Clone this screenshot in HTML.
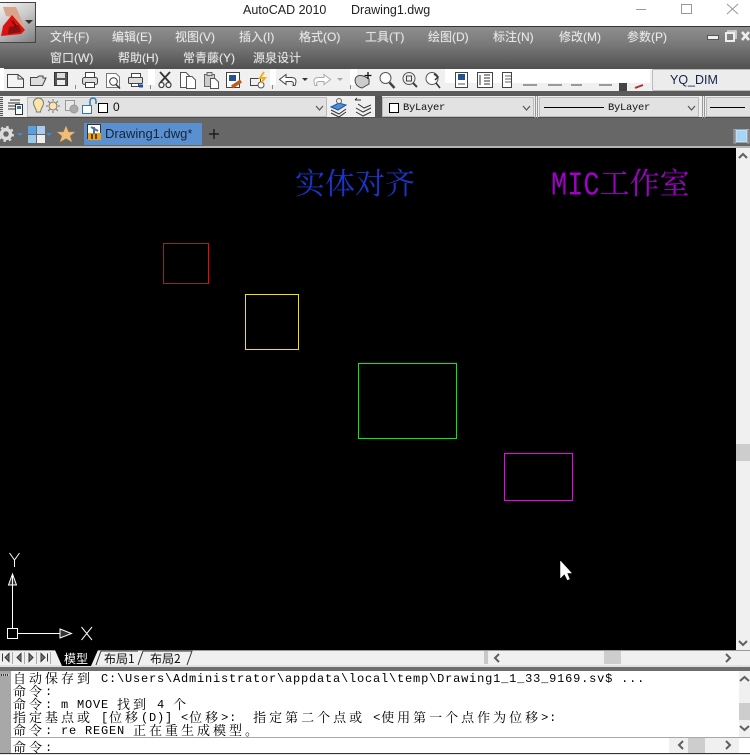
<!DOCTYPE html>
<html><head><meta charset="utf-8">
<style>
html,body{margin:0;padding:0;background:#000}
#p{position:relative;width:750px;height:755px;overflow:hidden;background:#000;font-family:"Liberation Sans","Noto Sans CJK SC",sans-serif}
#p div{position:absolute}
.t{white-space:nowrap}
.m{color:#e8e8e8;font-size:12px;line-height:16px;white-space:nowrap;font-family:"Liberation Sans","WenQuanYi Zen Hei",sans-serif;text-shadow:0 0 1px rgba(255,255,255,.35)}
.c{left:13px;white-space:pre;font-family:"Liberation Mono",monospace;font-size:12px;letter-spacing:.8px;line-height:13px;color:#000;height:13px}
.z{font-family:"Noto Serif CJK SC","WenQuanYi Zen Hei",serif;font-size:13px;letter-spacing:3px;line-height:13px;position:relative;top:1px}
svg{position:absolute;overflow:visible}
</style></head><body>
<div id="p">
<!-- title -->
<div style="left:0;top:0;width:750px;height:26px;background:#fff"></div>
<div class="t" style="left:243px;top:2px;font-size:12.5px;line-height:16px;color:#222">AutoCAD 2010</div>
<div class="t" style="left:351px;top:2px;font-size:12.5px;line-height:16px;color:#222">Drawing1.dwg</div>
<svg style="left:0;top:0" width="750" height="26"><path d="M636 9.5H646M681.5 4.5H691.5V13.5H681.5ZM727 4L738 14M738 4L727 14" stroke="#999" fill="none"/></svg>
<!-- menu -->
<div style="left:0;top:26px;width:750px;height:43px;background:linear-gradient(#8e8e8e,#7a7a7a 40%,#505050);border-top:1px solid #333;box-sizing:border-box"></div>
<div class="m" style="left:50px;top:29px">文件(F)</div>
<div class="m" style="left:112px;top:29px">编辑(E)</div>
<div class="m" style="left:175px;top:29px">视图(V)</div>
<div class="m" style="left:239px;top:29px">插入(I)</div>
<div class="m" style="left:299px;top:29px">格式(O)</div>
<div class="m" style="left:365px;top:29px">工具(T)</div>
<div class="m" style="left:428px;top:29px">绘图(D)</div>
<div class="m" style="left:493px;top:29px">标注(N)</div>
<div class="m" style="left:559px;top:29px">修改(M)</div>
<div class="m" style="left:627px;top:29px">参数(P)</div>
<div class="m" style="left:50px;top:50px">窗口(W)</div>
<div class="m" style="left:118px;top:50px">帮助(H)</div>
<div class="m" style="left:183px;top:50px">常青藤(Y)</div>
<div class="m" style="left:253px;top:50px">源泉设计</div>
<svg style="left:700px;top:28px" width="50" height="16" fill="none"><rect x="7.500" y="7.500" width="11" height="4" fill="#eee" stroke="#555"/><rect x="26" y="5" width="8" height="8" stroke="#eee" stroke-width="2"/><path d="M27 3H36V11" stroke="#ddd" stroke-width="1.500"/><path d="M42 4L49 12M49 4L42 12" stroke="#eee" stroke-width="2.500"/></svg>
<!-- app button -->
<div style="left:0;top:2px;width:36px;height:41px;background:linear-gradient(150deg,#f2f2f2,#c8c8c8 45%,#7e7e7e);border:1px solid #444;border-left:0;box-sizing:border-box"></div>
<svg style="left:0;top:0" width="36" height="43"><path d="M3 7L16 7L26 30L12 17L6 16Z" fill="#d8a48c"/><path d="M12 15L25 30L21 34L1 36L3 26Z" fill="#dc1212"/><path d="M9 27L19 25L21 32L8 34Z" fill="#8a1010"/><path d="M12 21L16 26" stroke="#600" stroke-width="1.500"/><path d="M25 20H33L29 24Z" fill="#333"/></svg>
<!-- toolbar row 1 -->
<div style="left:0;top:69px;width:750px;height:22px;background:#f0f0f0"></div>
<div style="left:0;top:68px;width:4px;height:22px;background:#fff"></div>
<div style="left:148px;top:69px;width:7px;height:16px;background:#fff"></div>
<div style="left:270px;top:69px;width:6px;height:16px;background:#fff"></div>
<div style="left:350px;top:69px;width:7px;height:16px;background:#fff"></div>
<div style="left:445px;top:69px;width:205px;height:14px;background:#fff"></div>
<div style="left:652px;top:69px;width:98px;height:22px;background:#ececec;border:1px solid #bbb;border-right:0;box-sizing:border-box;border-radius:2px 0 0 2px"></div>
<div class="t" style="left:670px;top:72px;font-size:12.5px;line-height:16px;color:#15234a">YQ_DIM</div>
<div style="left:0;top:91px;width:750px;height:5px;background:#5c5c5c"></div>
<svg style="left:0;top:69px" width="650" height="23" fill="none" stroke="#444">
<path d="M7.500 5.500H18L23.500 10V18.500H7.500Z" fill="#f4f4f4" stroke="#444"/><path d="M18 5.500V10H23.500" stroke="#444"/>
<path d="M30.500 8.500H37L39 7H43V9H46L42.500 16.500H30.500Z" fill="#ddd" stroke="#444"/>
<rect x="54.500" y="3.500" width="13" height="13" fill="#555" stroke="#333"/><rect x="57" y="4" width="8" height="5" fill="#ddd" stroke="none"/><rect x="57" y="11" width="8" height="5" fill="#eee" stroke="none"/>
<rect x="85.500" y="3.500" width="9" height="6" fill="#fff"/><rect x="82.500" y="8.500" width="15" height="7" rx="2" fill="#ddd"/><rect x="85.500" y="13.500" width="9" height="5" fill="#fff"/>
<path d="M106.500 4.500H116L119.500 8V18.500H106.500Z" fill="#fff" stroke="#777"/><circle cx="113.500" cy="12.500" r="3.800" fill="#fff" stroke="#333"/><path d="M116 15.500L120 19.500" stroke="#333" stroke-width="1.500"/>
<rect x="131.500" y="4.500" width="9" height="4" fill="#fff"/><rect x="128.500" y="8.500" width="14" height="6" rx="1" fill="#ddd"/><rect x="131.500" y="14.500" width="7" height="3" fill="#fff"/><path d="M139 17H143" stroke="#1b4fa0" stroke-width="3"/>
<path d="M160 3L170 14M170 3L160 14" stroke="#333" stroke-width="1.800"/><circle cx="161.500" cy="16" r="2.500" fill="#fff" stroke-width="1.300"/><circle cx="168.500" cy="16" r="2.500" fill="#fff" stroke-width="1.300"/>
<path d="M180.500 3.500H186L189.500 7V18.500H180.500Z" fill="#fff" stroke="#555"/><path d="M186.500 7.500H192L195.500 11V19.500H186.500Z" fill="#fff" stroke="#555"/>
<rect x="204.500" y="5.500" width="10" height="12" fill="#ccc" stroke="#666"/><rect x="207" y="3.500" width="5" height="3" fill="#ddd" stroke="#666"/><path d="M210.500 9.500H215L218.500 13V19.500H210.500Z" fill="#fff" stroke="#555"/>
<rect x="226.500" y="3.500" width="13" height="15" fill="#fff" stroke="#444"/><rect x="229" y="6" width="7" height="6" fill="#24528f" stroke="none"/><path d="M232 18L241 12" stroke="#c05a1a" stroke-width="3.500"/>
<rect x="250.500" y="9.500" width="10" height="7" stroke="#444"/><circle cx="261" cy="16" r="3" fill="#fff" stroke="#555"/><path d="M264 3L260 9H265L261 14" stroke="#f0b020" stroke-width="2"/>
<path d="M286 5.500L279.500 10.500L286 15.500V12.500H291C293 12.500 294 14 293 16.500H295C297 11 296 8.500 291 8.500H286Z" fill="#fff" stroke="#444"/>
<path d="M302 9H308L305 12Z" fill="#333" stroke="none"/>
<path d="M324 5.500L330.500 10.500L324 15.500V12.500H319C317 12.500 316 14 317 16.500H315C313 11 314 8.500 319 8.500H324Z" fill="#fff" stroke="#aaa"/>
<path d="M337 9H343L340 12Z" fill="#aaa" stroke="none"/>
<path d="M355.500 9C358 5 363 6 369 10V15L362 19C357 18 354 14 355.500 9Z" fill="#ccc" stroke="#444"/><path d="M368 3V10M364.500 6.500H371.500" stroke="#111" stroke-width="1.300"/>
<circle cx="385.500" cy="9" r="5.500" fill="#fff" stroke="#555"/><path d="M389.500 13.500L394.500 19" stroke="#444" stroke-width="2.500"/>
<circle cx="409" cy="9.500" r="6" fill="#eee" stroke="#555"/><rect x="406.500" y="7" width="5" height="5" stroke="#444"/><path d="M413 14L417 18" stroke="#444" stroke-width="2"/>
<circle cx="432" cy="9.500" r="6" fill="#fff" stroke="#555"/><path d="M436 14L440 19M434 5L438 8L435 11" stroke="#333" stroke-width="1.500"/>
<rect x="455.500" y="3.500" width="12" height="15" fill="#fff" stroke="#444"/><rect x="458" y="5" width="7" height="6" fill="#24528f" stroke="none"/><path d="M458 15H465" stroke="#555"/>
<rect x="477.500" y="3.500" width="15" height="15" fill="#fff" stroke="#444"/><path d="M484 6H490M484 9H490M484 12H490M484 15H490M480 6V16" stroke="#777" stroke-width="1.500"/>
<rect x="502.500" y="3.500" width="9" height="15" fill="#fff" stroke="#444"/><path d="M505 7H511M505 10H511M505 13H511" stroke="#999" stroke-width="1.500"/>
<path d="M523 16H537M548 16H562M571 16H582M599 16H612" stroke="#444"/>
<rect x="619" y="14" width="8" height="8" fill="#444" stroke="none"/>
<path d="M635 19L643 16" stroke="#a33" stroke-width="2"/>
<path d="M75.500 16V20M150.500 16V20M272.500 16V20M350.500 16V20" stroke="#888"/>
</svg>
<!-- layers row -->
<div style="left:0;top:96px;width:750px;height:22px;background:#efefef;border-bottom:1px solid #4d4d4d;box-sizing:border-box"></div>
<div style="left:0;top:97px;width:3px;height:20px;background:repeating-linear-gradient(#555 0 1px,#ddd 1px 2px)"></div>
<div style="left:27px;top:97px;width:300px;height:20px;background:#e2e2e2;border:1px solid #bbb;box-sizing:border-box"></div>
<div style="left:382px;top:97px;width:152px;height:20px;background:#e2e2e2;border:1px solid #bbb;box-sizing:border-box"></div>
<div style="left:539px;top:97px;width:160px;height:20px;background:#e2e2e2;border:1px solid #bbb;box-sizing:border-box"></div>
<div style="left:706px;top:97px;width:44px;height:20px;background:#e2e2e2;border:1px solid #bbb;border-right:0;box-sizing:border-box"></div>
<div style="left:375px;top:96px;width:7px;height:22px;background:#555"></div>
<div class="t" style="left:113px;top:100px;font-size:12px;line-height:14px;color:#111">0</div>
<div class="t" style="left:403px;top:101px;font:10.500px/14px 'Liberation Mono',monospace;color:#111;letter-spacing:-.3px">ByLayer</div>
<div class="t" style="left:608px;top:101px;font:10.500px/14px 'Liberation Mono',monospace;color:#111;letter-spacing:-.3px">ByLayer</div>
<svg style="left:0;top:95px" width="750" height="24" fill="none">
<path d="M8 8H20M8 11H20M8 14H20" stroke="#333"/><path d="M10 5H20" stroke="#333"/><rect x="15.500" y="9.500" width="7" height="10" fill="#fff" stroke="#333"/><rect x="17" y="11" width="4" height="3" fill="#2c7ab0"/>
<path d="M33.500 8a5 5 0 1 1 10 0c0 4-3 5-3 9h-4c0-4-3-5-3-9Z" fill="#fbe6a8" stroke="#777"/>
<circle cx="53" cy="11" r="4" fill="#fbe3b0" stroke="#777"/><path d="M53 4V6M53 16V18M46 11H48M58 11H60M48 6L50 8M56 14L58 16M48 16L50 14M56 8L58 6" stroke="#777"/>
<rect x="65.500" y="5.500" width="9" height="10" fill="#e8e8e8" stroke="#999"/><circle cx="74" cy="14" r="4" fill="#aaa" stroke="#999"/>
<rect x="82.500" y="10.500" width="9" height="8" fill="#fff" stroke="#2c7ab0"/><path d="M90 10V6a3 3 0 0 1 6 0V9" stroke="#2c7ab0" stroke-width="1.500"/>
<rect x="98.500" y="8.500" width="9" height="9" fill="#fff" stroke="#000"/>
<path d="M316 11L319.500 15L323 11" stroke="#555" stroke-width="1.200"/>
<path d="M331 12L339 8L346 10L338 15Z" fill="#4a90d8" stroke="#1a50a0"/><path d="M331 15L339 19L346 14M331 18L339 22L346 17" stroke="#333"/><circle cx="339" cy="6" r="2.500" fill="#eee" stroke="#666"/>
<path d="M355 5H361M355 5L357 3M358 9L364 13L371 10M356 13L363 17L371 13M356 17L363 21L371 17" stroke="#333"/>
<rect x="389.500" y="8.500" width="9" height="9" fill="#fff" stroke="#000"/>
<path d="M523 11L526.500 15L530 11M688 11L691.500 15L695 11" stroke="#555" stroke-width="1.200"/>
<path d="M544 12.500H604M710 12.500H745" stroke="#000"/>
<path d="M535.500 1V23M537.500 1V23M702.500 1V23M704.500 1V23" stroke="#999"/>
</svg>
<!-- tab row -->
<div style="left:0;top:118px;width:750px;height:28px;background:#676767"></div>
<div style="left:0;top:146px;width:750px;height:2px;background:#b5b5b5"></div>
<div style="left:84px;top:123px;width:118px;height:22px;background:#5a90cf"></div>
<div class="t" style="left:105px;top:125px;font-size:13px;line-height:17px;color:#16243c">Drawing1.dwg*</div>
<svg style="left:0;top:119px" width="750" height="27" fill="none">
<circle cx="6" cy="15" r="4.500" stroke="#ddd" stroke-width="3.500"/>
<circle cx="6" cy="15" r="7" stroke="#ddd" stroke-width="2" stroke-dasharray="2.500 3"/>
<path d="M17 14H23L20 17Z" fill="#3d8ddb"/>
<rect x="28" y="7" width="8" height="8" fill="#5aa0de"/><rect x="37" y="7" width="8" height="8" fill="#a8cdf0"/><rect x="28" y="16" width="8" height="8" fill="#9cc8ee"/><rect x="37" y="16" width="8" height="8" fill="#eee"/>
<path d="M46 14H52L49 17Z" fill="#3d8ddb"/>
<path d="M66 7L68.500 13H75L70 17L72 23L66 19.500L60 23L62 17L57 13H63.500Z" fill="#efbd7a" stroke="#c89050" stroke-width=".5"/>
<rect x="87.500" y="5.500" width="13" height="14" fill="#fff" stroke="#333"/><rect x="88" y="14" width="13" height="7" fill="#f0a010"/><path d="M91 8L98 12M94 8V15" stroke="#4a6fa0" stroke-width="2"/><path d="M92 15V20M96 15V20" stroke="#222" stroke-width="1.500"/>
<path d="M209 15H219M214 10V20" stroke="#111" stroke-width="1.200"/>
<path d="M735.500 10.500H734V24H736M747 10.500H749V24H747" stroke="#aaa"/><rect x="736" y="11" width="11" height="12" fill="#a8d4f6" stroke="#cfe7fa"/>
</svg>
<!-- canvas -->
<div style="left:0;top:148px;width:736px;height:502px;background:#000"></div>
<div class="t" style="left:295px;top:161px;font:30px/40px 'Noto Serif CJK SC','WenQuanYi Zen Hei',serif;color:#1a35c8">实体对齐</div>
<div class="t" style="left:551px;top:161px;font:30px/40px 'Noto Serif CJK SC','WenQuanYi Zen Hei',serif;color:#a000c8"><span style="display:inline-block;font:27px/40px 'Liberation Mono',monospace;transform:scaleY(1.25);transform-origin:50% 50%;position:relative;top:-1px">MIC</span>工作室</div>
<svg style="left:0;top:148px" width="736" height="502" fill="none">
<path d="M208.500 95.500H163.500V135.500H208.500" stroke="#8a2a2a"/><path d="M208.500 95V136" stroke="#f00"/>
<rect x="245.500" y="146.500" width="53" height="55" stroke="#f5e000"/>
<rect x="358.500" y="215.500" width="98" height="75" stroke="#00f000"/>
<rect x="504.500" y="305.500" width="68" height="47" stroke="#f000f0"/>
<!-- UCS -->
<rect x="7.500" y="480.500" width="10" height="10" stroke="#fff"/>
<path d="M12.500 480V426M18 485.500H60M12.500 426L8.500 437H16.500ZM60 481L71.500 485.500L60 490Z" stroke="#fff" fill="#333"/>
<path d="M9.500 405L14.500 412V419M19.500 405L14.500 412M81.500 479L92 492M92 479L81.500 492" stroke="#fff"/>
<path d="M560.500 413V430L564.500 426L567.500 432L569.500 431L567 425H571.500Z" fill="#fff" stroke="#fff" stroke-width=".5"/>
</svg>
<!-- right scrollbar -->
<div style="left:736px;top:148px;width:14px;height:502px;background:#f0f0f0"></div>
<div style="left:736px;top:444px;width:14px;height:17px;background:#cdcdcd"></div>
<svg style="left:736px;top:148px" width="14" height="502" fill="none"><path d="M3 10L7 6L11 10M3 493L7 497L11 493" stroke="#606060" stroke-width="2"/></svg>
<!-- layout tabs -->
<div style="left:0;top:650px;width:750px;height:17px;background:#f0f0f0;border-top:1px solid #9a9a9a;box-sizing:border-box"></div>
<div style="left:0;top:665px;width:750px;height:2px;background:#e0e0e0"></div>
<svg style="left:0;top:650px" width="200" height="17" fill="none">
<path d="M55 0L62 16H91L98 0Z" fill="#000"/>
<path d="M96 15L101 1H138M138 15L143 1H192L187 15" stroke="#333"/>
<path d="M12.500 2V14M24.500 2V14M36.500 2V14M50.500 2V14" stroke="#aaa"/>
<path d="M2.500 3.500V11.500M9 3.500L5 7.500L9 11.500ZM21 3.500L17 7.500L21 11.500ZM29 3.500L33 7.500L29 11.500ZM41 3.500L45 7.500L41 11.500ZM47.500 3.500V11.500" stroke="#333" fill="#777"/>
</svg>
<div class="t" style="left:64px;top:651px;font:12px/15px 'WenQuanYi Zen Hei','Noto Sans CJK SC',sans-serif;color:#fff">模型</div>
<div class="t" style="left:104px;top:651px;font:12px/15px 'WenQuanYi Zen Hei','Noto Sans CJK SC',sans-serif;color:#111">布局1</div>
<div class="t" style="left:150px;top:651px;font:12px/15px 'WenQuanYi Zen Hei','Noto Sans CJK SC',sans-serif;color:#111">布局2</div>
<div style="left:484px;top:651px;width:4px;height:13px;background:#c8c8c8"></div>
<div style="left:604px;top:651px;width:17px;height:13px;background:#cdcdcd"></div>
<svg style="left:490px;top:650px" width="250" height="17" fill="none"><path d="M9 4L5 8L9 12M236 4L240 8L236 12" stroke="#606060" stroke-width="2"/></svg>
<!-- command -->
<div style="left:0;top:667px;width:750px;height:4px;background:#6e6e6e"></div>
<div style="left:0;top:671px;width:750px;height:84px;background:#fff"></div>
<div style="left:0;top:671px;width:11px;height:82px;background:#a8a8a8"></div>
<div style="left:1px;top:674px;width:8px;height:2px;background:repeating-linear-gradient(90deg,#333 0 1px,#ccc 1px 2px)"></div>
<div class="c" style="top:670px"><span class="z">自动保存到</span> C:\Users\Administrator\appdata\local\temp\Drawing1_1_33_9169.sv$ ...</div>
<div class="c" style="top:683px"><span class="z">命令</span>:</div>
<div class="c" style="top:696px"><span class="z">命令</span>: m MOVE <span class="z">找到</span> 4 <span class="z">个</span></div>
<div class="c" style="top:709px"><span class="z">指定基点或</span> [<span class="z">位移</span>(D)] &lt;<span class="z">位移</span>&gt;:  <span class="z">指定第二个点或</span> &lt;<span class="z">使用第一个点作为位移</span>&gt;:</div>
<div class="c" style="top:722px"><span class="z">命令</span>: re REGEN <span class="z">正在重生成模型。</span></div>
<div style="left:11px;top:737px;width:739px;height:1px;background:#a8a8a8"></div>
<div class="c" style="top:739px"><span class="z">命令</span>:</div>
<div style="left:739px;top:671px;width:11px;height:66px;background:#f0f0f0"></div>
<div style="left:739px;top:703px;width:11px;height:17px;background:#cdcdcd"></div>
<svg style="left:739px;top:671px" width="11" height="66" fill="none"><path d="M1 10L5.500 6L10 10M1 55L5.500 59L10 55" stroke="#606060" stroke-width="2"/></svg>
<div style="left:669px;top:738px;width:70px;height:15px;background:#f0f0f0"></div>
<div style="left:688px;top:738px;width:17px;height:15px;background:#cdcdcd"></div>
<svg style="left:669px;top:738px" width="70" height="14" fill="none"><path d="M14 3L10 7L14 11M57 3L61 7L57 11" stroke="#606060" stroke-width="2"/></svg>
<div style="left:0;top:753px;width:750px;height:2px;background:#e8e8e8;border-top:1px solid #333;box-sizing:border-box"></div>
</div>
</body></html>
